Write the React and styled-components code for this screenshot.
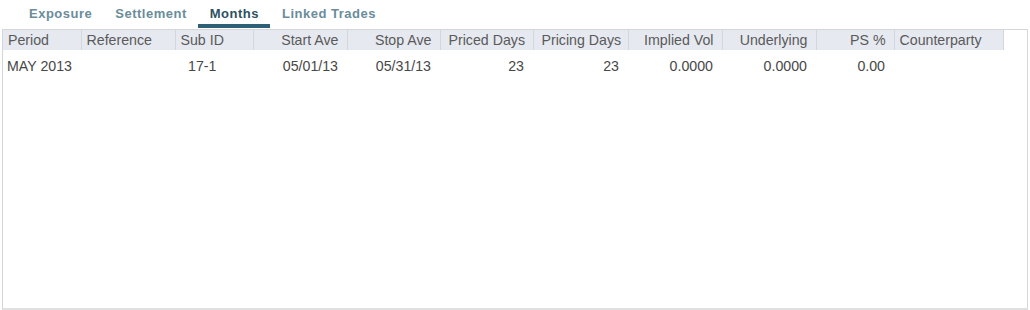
import React from "react";
import styled, { createGlobalStyle } from "styled-components";

const GlobalStyle = createGlobalStyle`
  body {
    margin: 0;
    background: #ffffff;
    font-family: "Liberation Sans", Arial, sans-serif;
  }
`;

const Page = styled.div`
  width: 1030px;
  height: 310px;
  padding: 0 2px;
  box-sizing: border-box;
  display: flex;
  flex-direction: column;
`;

const TabBar = styled.div`
  display: flex;
  height: 29px;
  padding-left: 15px;
`;

const Tab = styled.div`
  padding: 0 11px 0 12px;
  height: 28px;
  line-height: 27px;
  box-sizing: border-box;
  font-size: 13px;
  font-weight: bold;
  letter-spacing: 0.5px;
  color: ${(p) => (p.active ? "#2d5164" : "#6a8c9b")};
  border-bottom: 4px solid ${(p) => (p.active ? "#2f5f74" : "transparent")};
  cursor: pointer;
`;

const Panel = styled.div`
  flex: 1;
  border: 1px solid #d6d6d6;
  border-bottom: 2px solid #e0e0e0;
  background: #ffffff;
`;

const Grid = styled.table`
  width: 1000px;
  table-layout: fixed;
  border-collapse: collapse;
  font-size: 14.2px;
`;

const HeadCell = styled.th`
  height: 20px;
  padding: 0 ${(p) => (p.right ? "8px" : "5px")};
  background: #e6e9f0;
  border-right: 1px solid #d2d6de;
  font-weight: normal;
  color: #5a5a5a;
  text-align: ${(p) => (p.right ? "right" : "left")};
  white-space: nowrap;
  overflow: hidden;
`;

const Cell = styled.td`
  height: 31px;
  padding: 0 ${(p) => (p.right ? "9px" : "5px")} 0 ${(p) => (p.right ? "0" : p.indent ? "13px" : "4px")};
  color: #474747;
  text-align: ${(p) => (p.right ? "right" : "left")};
  white-space: nowrap;
`;

const columns = [
  { label: "Period", width: 78 },
  { label: "Reference", width: 94 },
  { label: "Sub ID", width: 78 },
  { label: "Start Ave", width: 94, right: true },
  { label: "Stop Ave", width: 93, right: true },
  { label: "Priced Days", width: 93, right: true },
  { label: "Pricing Days", width: 95, right: true },
  { label: "Implied Vol", width: 94, right: true },
  { label: "Underlying", width: 94, right: true },
  { label: "PS %", width: 78, right: true },
  { label: "Counterparty", width: 109 },
];

const rows = [
  ["MAY 2013", "", "17-1", "05/01/13", "05/31/13", "23", "23", "0.0000", "0.0000", "0.00", ""],
];

const tabs = ["Exposure", "Settlement", "Months", "Linked Trades"];

export default function App() {
  return (
    <>
      <GlobalStyle />
      <Page>
        <TabBar>
          {tabs.map((t) => (
            <Tab key={t} active={t === "Months"}>
              {t}
            </Tab>
          ))}
        </TabBar>
        <Panel>
          <Grid>
            <colgroup>
              {columns.map((c) => (
                <col key={c.label} style={{ width: c.width }} />
              ))}
            </colgroup>
            <thead>
              <tr>
                {columns.map((c) => (
                  <HeadCell key={c.label} right={c.right}>
                    {c.label}
                  </HeadCell>
                ))}
              </tr>
            </thead>
            <tbody>
              {rows.map((r, i) => (
                <tr key={i}>
                  {r.map((v, j) => (
                    <Cell key={j} right={columns[j].right} indent={j === 2}>
                      {v}
                    </Cell>
                  ))}
                </tr>
              ))}
            </tbody>
          </Grid>
        </Panel>
      </Page>
    </>
  );
}
